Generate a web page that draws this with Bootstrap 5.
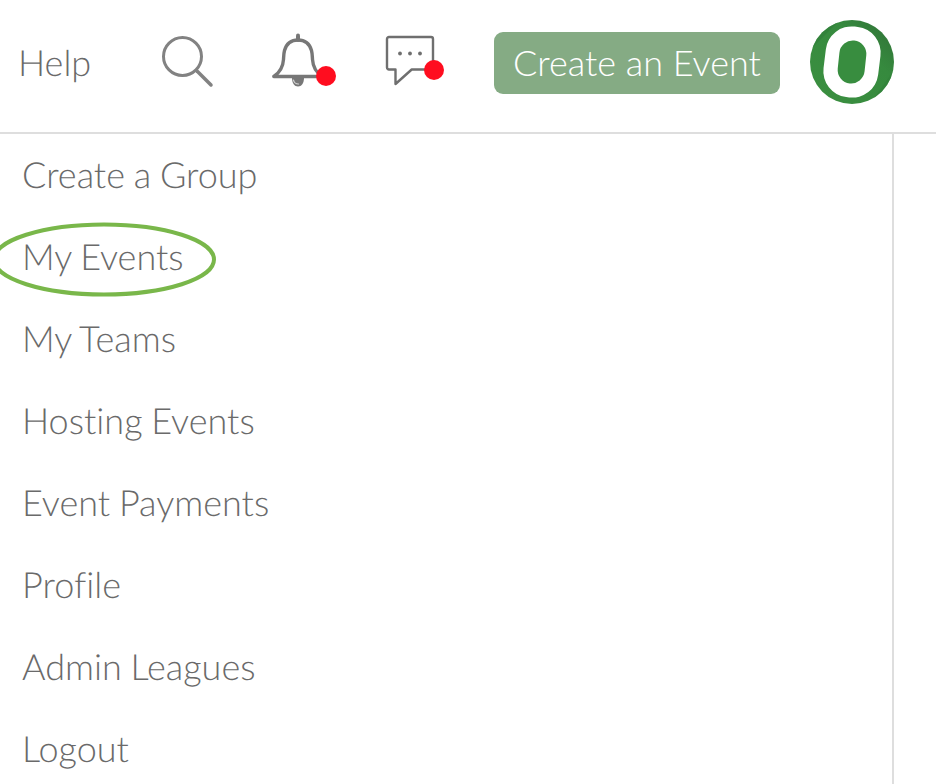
<!DOCTYPE html>
<html lang="en">
<head>
<meta charset="utf-8">
<title>Menu</title>
<link rel="stylesheet" href="https://cdn.jsdelivr.net/npm/bootstrap@5.3.0/dist/css/bootstrap.min.css">
<style>
html, body { height: 100%; overflow: hidden; }
body { font-family: "Lato", "Liberation Sans", sans-serif; font-weight: 300; color: #6a6a6a; background: #fff; text-rendering: geometricPrecision; font-variant-ligatures: none; }
.top-bar { height: 134px; border-bottom: 2px solid #dedede; padding: 0 42px 8px 19px; }
.help-link { font-size: 36px; color: #6a6a6a; text-decoration: none; width: 142px; margin-left: -1px; padding-right: 0; }
.icon-slot { position: relative; display: block; }
.icon-search { width: 54px; height: 54px; margin-left: 1px; margin-right: 57px; }
.icon-bell { width: 64px; height: 60px; margin-right: 49px; }
.icon-chat { width: 60px; height: 54px; margin-right: 49px; }
.alert-dot { position: absolute; width: 20px; height: 20px; border-radius: 50%; background: #ff0d1f; }
.icon-bell .alert-dot { right: 0; bottom: 6px; }
.icon-chat .alert-dot { right: 1px; bottom: 9px; }
.create-btn { width: 286px; height: 62px; margin-top: 2px; padding: 0 0 2px; background: #85ab84; border: 0; border-radius: 9px; color: #fff; font-size: 36px; font-weight: 300; line-height: 58px; margin-right: 30px; }
.avatar-mark { width: 84px; height: 84px; display: block; }
.side-panel { width: 894px; height: 650px; border-right: 2px solid #dedede; }
.side-item { display: block; height: 82px; padding-left: 22px; font-size: 36px; line-height: 80px; word-spacing: -1px; color: #6a6a6a; text-decoration: none; }
.side-marked { position: relative; }
.ring-mark { position: absolute; left: -10px; top: 0; width: 235px; height: 82px; }
</style>
</head>
<body>
<header class="top-bar d-flex align-items-center">
  <a class="help-link" href="#">Help</a>
  <span class="icon-slot icon-search">
    <svg width="54" height="54" viewBox="0 0 54 54" fill="none" stroke="#828282"><circle cx="21.500" cy="21.500" r="19" stroke-width="3"/><path d="M36 36l14 14" stroke-width="3.500" stroke-linecap="round"/></svg>
  </span>
  <span class="icon-slot icon-bell">
    <svg width="64" height="60" viewBox="0 0 64 60" fill="none" stroke="#777" stroke-width="3.400" stroke-linecap="round" stroke-linejoin="round"><path d="M20 46c0 5 2.500 8.500 6 8.500s6-3.500 6-8.500z" fill="#777" stroke="none"/><path d="M21.500 48c.5 2.500 2.500 4 5 4" stroke="#d8d8d8" stroke-width="1.200"/><path d="M26 3.500V8" stroke-width="4"/><path d="M1.800 44.500c6-4 9.200-9 9.700-17 .2-3 .2-6 1-9 2-7 7-10.500 13.500-10.500s11.500 3.500 13.500 10.500c.8 3 .8 6 1 9 .5 8 3.700 13 9.700 17z"/></svg>
    <span class="alert-dot"></span>
  </span>
  <span class="icon-slot icon-chat">
    <svg width="60" height="54" viewBox="0 0 60 54" fill="none" stroke="#6f6f6f" stroke-width="2.400" stroke-linejoin="round"><path d="M4 2h42a2 2 0 0 1 2 2v28.500a2 2 0 0 1-2 2H26.700L10.500 49V34.500H4a2 2 0 0 1-2-2V4a2 2 0 0 1 2-2z"/><circle cx="15" cy="18.500" r="1.900" fill="#6f6f6f" stroke="none"/><circle cx="25" cy="18.500" r="1.900" fill="#6f6f6f" stroke="none"/><circle cx="35" cy="18.500" r="1.900" fill="#6f6f6f" stroke="none"/></svg>
    <span class="alert-dot"></span>
  </span>
  <button class="btn create-btn" type="button">Create an Event</button>
  <svg class="avatar-mark" viewBox="0 0 84 84" role="img" aria-label="logo">
    <defs>
      <linearGradient id="avatarFill" x1="1" y1="0" x2="0" y2="1"><stop offset="0" stop-color="#2f6f36"/><stop offset=".35" stop-color="#368a3e"/><stop offset="1" stop-color="#3b8f40"/></linearGradient>
      <clipPath id="avatarClip"><circle cx="42" cy="42" r="42"/></clipPath>
    </defs>
    <circle cx="42" cy="42" r="42" fill="url(#avatarFill)"/>
    <g clip-path="url(#avatarClip)"><path d="M0 30L30 0H0z" fill="#2f7d38" opacity=".6"/><path d="M84 50L60 84h24z" fill="#2f7d38" opacity=".5"/></g>
    <rect x="14.500" y="6.500" width="55" height="71" rx="26" fill="#fff" transform="rotate(7 42 42)"/>
    <rect x="28.500" y="20.500" width="27" height="43" rx="13.500" fill="#388d3f" transform="rotate(6 42 42)"/>
  </svg>
</header>
<nav class="side-panel">
  <a class="side-item" href="#">Create a Group</a>
  <a class="side-item side-marked" href="#">My Events
    <svg class="ring-mark" viewBox="0 0 235 82" fill="none"><ellipse cx="114" cy="43.500" rx="110" ry="35" stroke="#79b74a" stroke-width="4"/></svg>
  </a>
  <a class="side-item" href="#">My Teams</a>
  <a class="side-item" href="#">Hosting Events</a>
  <a class="side-item" href="#">Event Payments</a>
  <a class="side-item" href="#">Profile</a>
  <a class="side-item" href="#">Admin Leagues</a>
  <a class="side-item" href="#">Logout</a>
</nav>
<script src="https://cdn.jsdelivr.net/npm/bootstrap@5.3.0/dist/js/bootstrap.bundle.min.js"></script>
</body>
</html>
